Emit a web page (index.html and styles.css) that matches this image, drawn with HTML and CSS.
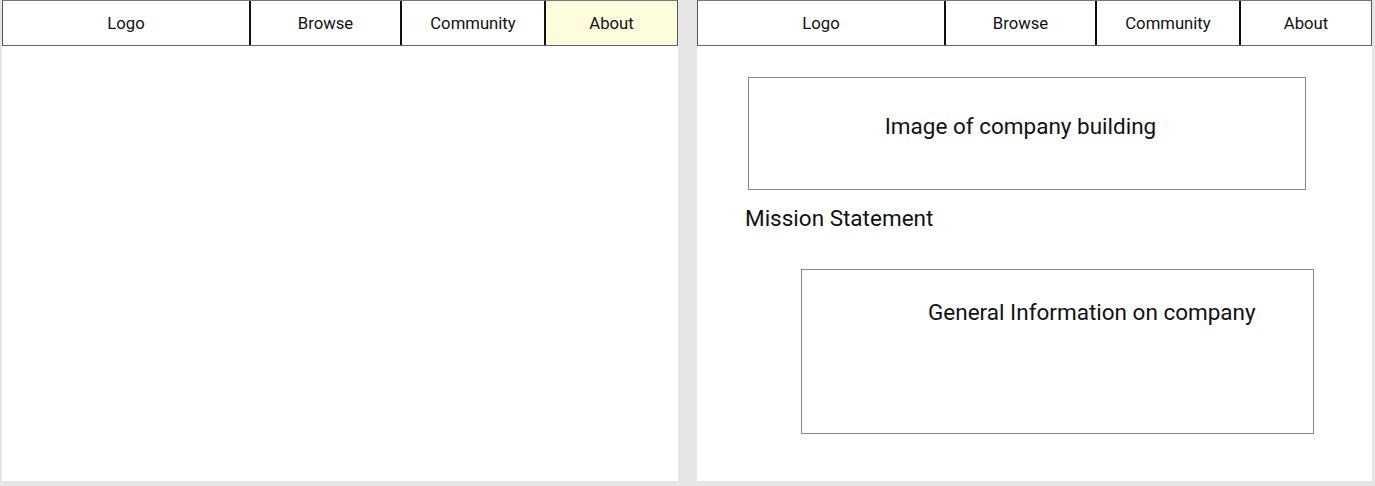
FILE: index.html
```html
<!DOCTYPE html>
<html>
<head>
<meta charset="utf-8">
<link rel="stylesheet" href="styles.css">
</head>
<body>
<div class="board">
  <div class="panel">
    <nav class="nav">
      <div class="cell c-logo">Logo</div>
      <div class="cell c-browse">Browse</div>
      <div class="cell c-comm">Community</div>
      <div class="cell c-about active">About</div>
    </nav>
  </div>
  <div class="panel panel-right">
    <nav class="nav">
      <div class="cell c-logo">Logo</div>
      <div class="cell c-browse">Browse</div>
      <div class="cell c-comm">Community</div>
      <div class="cell c-about">About</div>
    </nav>
    <div class="content">
      <div class="image-box">Image of company building</div>
      <div class="mission">Mission Statement</div>
      <div class="info-box">General Information on company</div>
    </div>
  </div>
</div>
</body>
</html>
```
FILE: styles.css
```css
html, body {
  margin: 0;
  padding: 0;
  background: #e6e6e6;
  font-family: Roboto, "Liberation Sans", sans-serif;
  color: #111;
}
.board {
  display: flex;
  gap: 19px;
  padding: 0 3px 5px 2px;
  height: 481px;
}
.panel {
  width: 676px;
  background: #fff;
  display: flex;
  flex-direction: column;
}
.panel-right { width: 675px; }
.nav {
  display: flex;
  height: 46px;
  box-sizing: border-box;
  border: 1px solid #555;
  border-top-color: #777;
  border-bottom-color: #666;
}
.cell {
  display: flex;
  align-items: center;
  justify-content: center;
  font-size: 16.7px;
  box-sizing: border-box;
  border-left: 2px solid #111;
  padding-top: 1px;
}
.cell:first-child { border-left: none; }
.c-logo { width: 246px; }
.c-browse { width: 151px; }
.c-comm { width: 144px; }
.c-about { flex: 1; }
.active { background: #fdfcdc; }

.content {
  display: flex;
  flex-direction: column;
  align-items: flex-start;
}
.image-box {
  margin: 31px 0 0 51px;
  width: 558px;
  height: 113px;
  box-sizing: border-box;
  border: 1px solid #888;
  font-size: 22.5px;
  text-align: center;
  padding: 35px 13px 0 0;
}
.mission {
  margin: 15px 0 0 48px;
  font-size: 22.5px;
  line-height: 26px;
}
.info-box {
  margin: 38px 0 0 104px;
  width: 513px;
  height: 165px;
  box-sizing: border-box;
  border: 1px solid #888;
  font-size: 22.5px;
  padding: 29px 0 0 126px;
}
```
